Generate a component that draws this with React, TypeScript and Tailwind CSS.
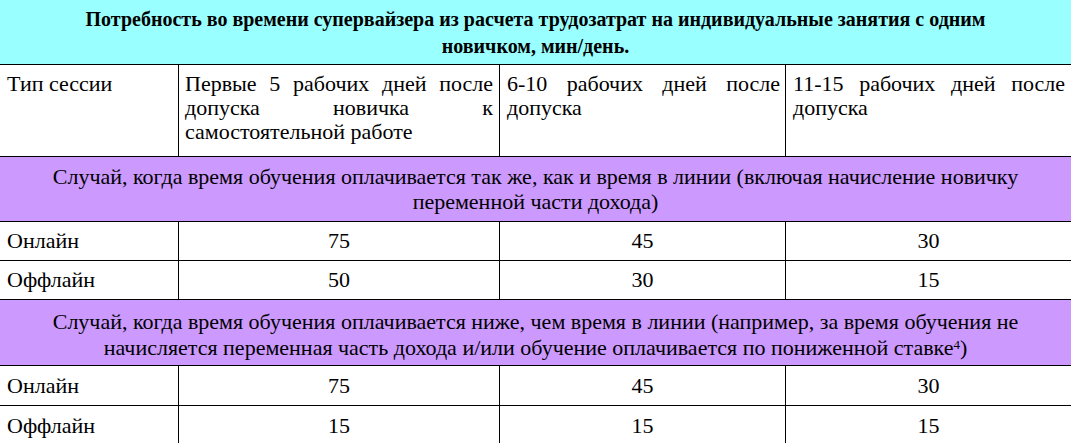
import React from "react";

const SERIF = "font-['Liberation_Serif']";

function JLine({ text }: { text: string }) {
  return (
    <div className="flex justify-between font-['Liberation_Serif']">
      {text.split(" ").map((w, i) => (
        <span key={i}>{w}</span>
      ))}
    </div>
  );
}

function DataRow({ label, a, b, c, tall }: { label: string; a: string; b: string; c: string; tall: boolean }) {
  return (
    <div
      className={
        tall
          ? "grid h-[40px] grid-cols-[178px_321px_286px_286px] border-b border-black bg-white"
          : "grid h-[39px] grid-cols-[178px_321px_286px_286px] border-b border-black bg-white"
      }
    >
      <div className="flex items-center pl-[7px] font-['Liberation_Serif']">{label}</div>
      <div className="flex items-center justify-center border-l border-black font-['Liberation_Serif']">{a}</div>
      <div className="flex items-center justify-center border-l border-black font-['Liberation_Serif']">{b}</div>
      <div className="flex items-center justify-center border-l border-black font-['Liberation_Serif']">{c}</div>
    </div>
  );
}

export default function App() {
  return (
    <div className="font-serif w-[1071px] h-[443px] overflow-hidden bg-white text-[22px] leading-[24px] text-black">
      <div className="h-[65px] border-b border-black bg-[#99ffff] pt-[6px] text-center text-[20px] font-bold leading-[27px]">
        <div className="whitespace-nowrap font-['Liberation_Serif']">
          Потребность во времени супервайзера из расчета трудозатрат на индивидуальные занятия с одним
        </div>
        <div className="whitespace-nowrap font-['Liberation_Serif']">новичком, мин/день.</div>
      </div>
      <div className="grid h-[92px] grid-cols-[178px_321px_286px_286px] border-b border-black bg-white">
        <div className="pl-[7px] pt-[7px] font-['Liberation_Serif']">Тип сессии</div>
        <div className="border-l border-black px-[6px] pt-[7px]">
          <JLine text="Первые 5 рабочих дней после" />
          <JLine text="допуска новичка к" />
          <div className="font-['Liberation_Serif']">самостоятельной работе</div>
        </div>
        <div className="border-l border-black pl-[7px] pr-[5px] pt-[7px]">
          <JLine text="6-10 рабочих дней после" />
          <div className="font-['Liberation_Serif']">допуска</div>
        </div>
        <div className="border-l border-black pl-[7px] pr-[6px] pt-[7px]">
          <JLine text="11-15 рабочих дней после" />
          <div className="font-['Liberation_Serif']">допуска</div>
        </div>
      </div>
      <div className="h-[65px] border-b border-black bg-[#cc99ff] pt-[7px] text-center leading-[25px]">
        <div className="whitespace-nowrap font-['Liberation_Serif']">
          Случай, когда время обучения оплачивается так же, как и время в линии (включая начисление новичку
        </div>
        <div className="whitespace-nowrap font-['Liberation_Serif']">переменной части дохода)</div>
      </div>
      <DataRow label="Онлайн" a="75" b="45" c="30" tall={false} />
      <DataRow label="Оффлайн" a="50" b="30" c="15" tall={false} />
      <div className="h-[66px] border-b border-black bg-[#cc99ff] pt-[9px] text-center leading-[26px]">
        <div className="whitespace-nowrap font-['Liberation_Serif']">
          Случай, когда время обучения оплачивается ниже, чем время в линии (например, за время обучения не
        </div>
        <div className="whitespace-nowrap font-['Liberation_Serif']">
          начисляется переменная часть дохода и/или обучение оплачивается по пониженной ставке
          <sup className="text-[13px] leading-none">4</sup>)
        </div>
      </div>
      <DataRow label="Онлайн" a="75" b="45" c="30" tall={true} />
      <DataRow label="Оффлайн" a="15" b="15" c="15" tall={true} />
    </div>
  );
}
